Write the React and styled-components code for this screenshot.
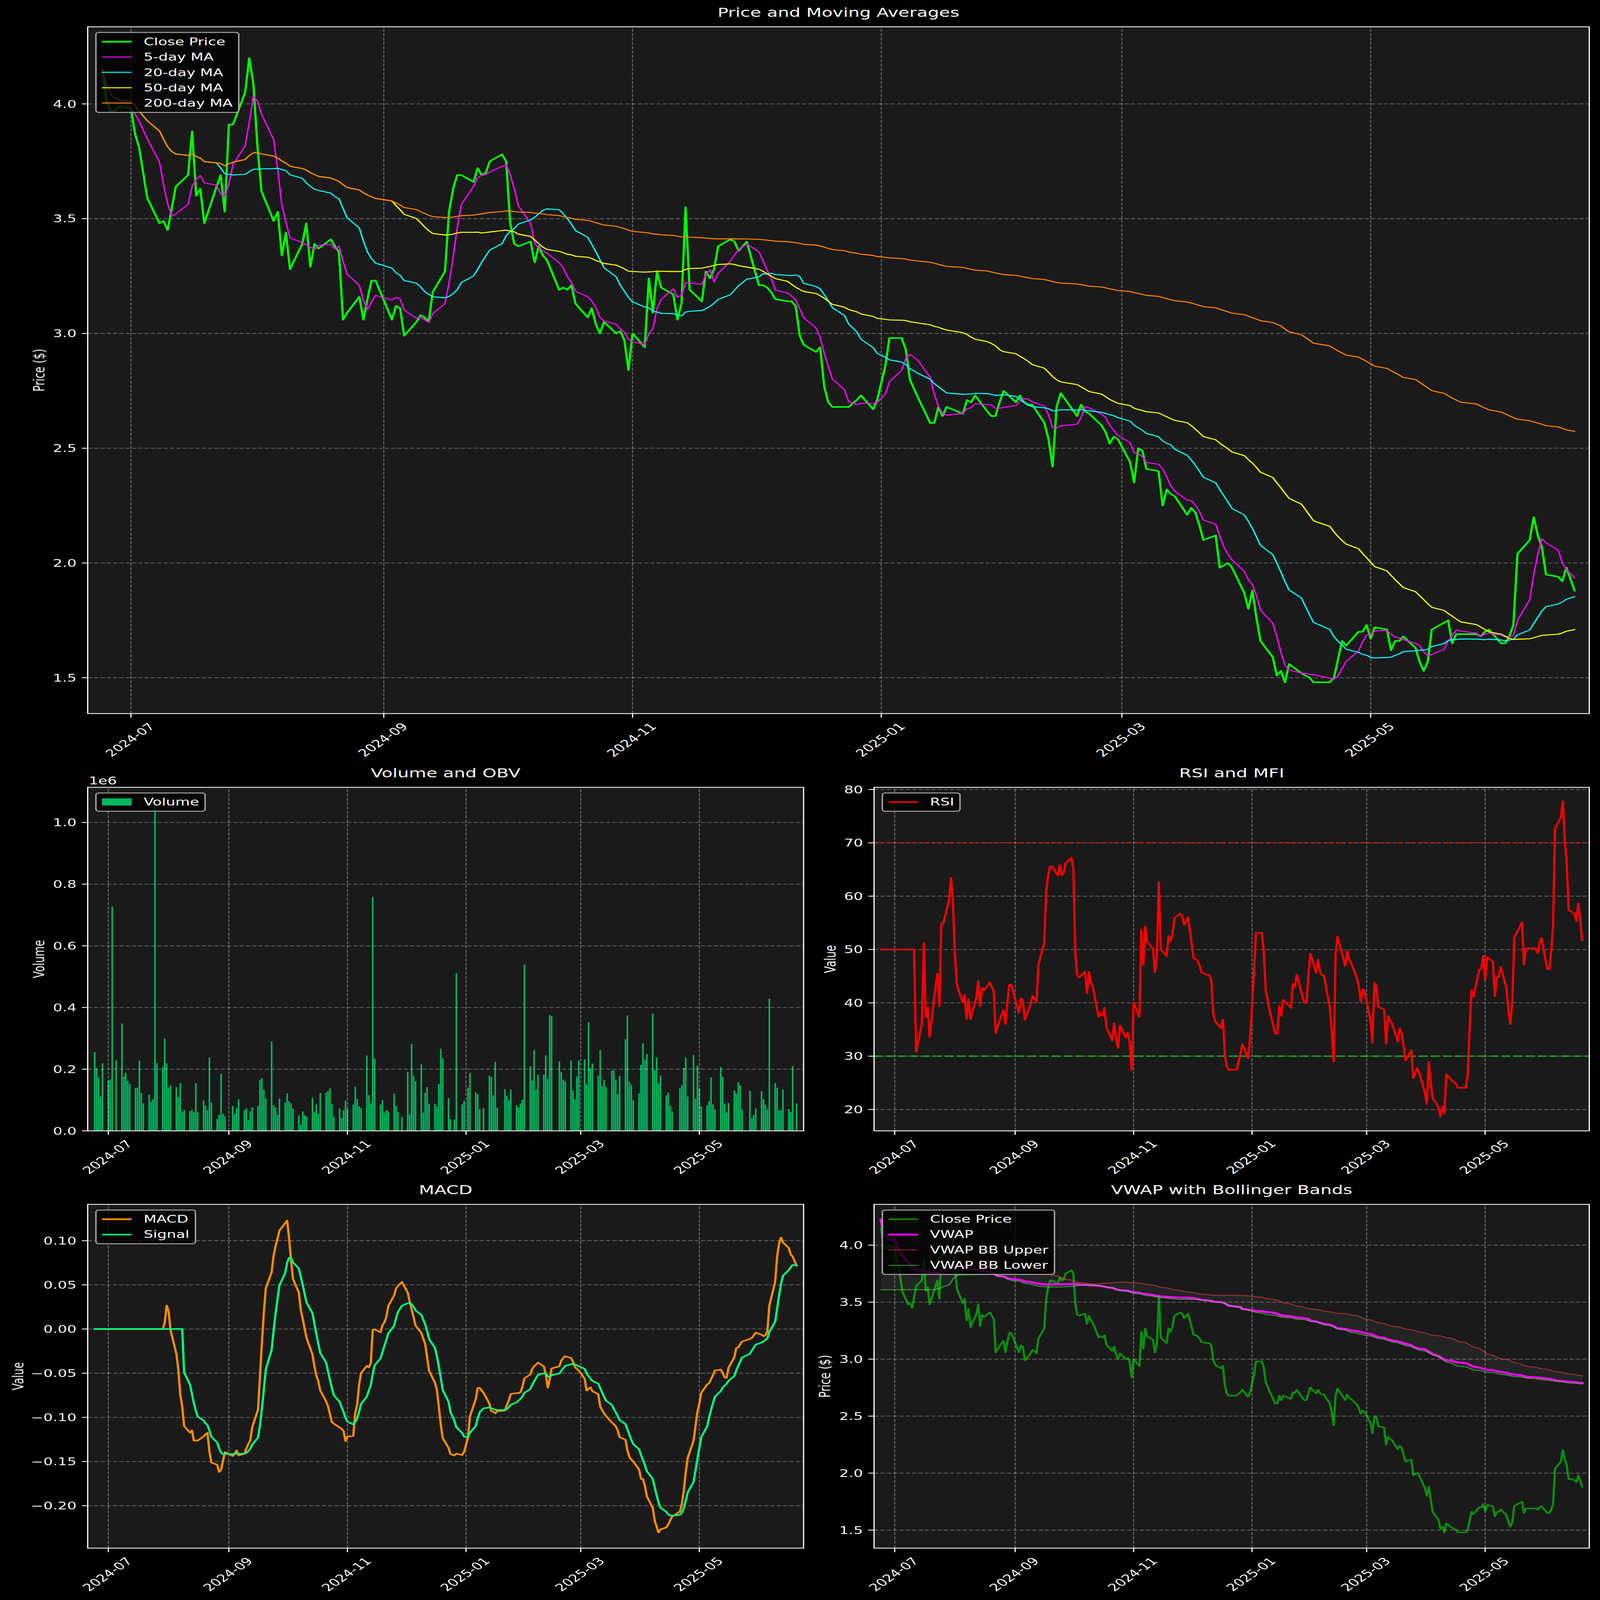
import React, { useEffect, useState } from 'react';
import styled, { createGlobalStyle } from 'styled-components';

const Global = createGlobalStyle`
  html, body { margin: 0; padding: 0; background: #000; overflow: hidden; }
`;

const FONT = '"DejaVu Sans", "Liberation Sans", sans-serif';
const PAGE_W = 4470;
const PAGE_H = 6507;

/* ---------- market data, one row per trading week ---------- */
const CLOSE_WEEKS = [
  [4.15,4.01,3.97,3.97,3.99],[3.98,3.87,3.81,3.59],[3.48,3.49,3.45,3.545,3.64],[3.69,3.88,3.60,3.63,3.48],
  [3.64,3.69,3.53,3.91,3.91],[4.05,4.20,4.09,3.82,3.62],[3.49,3.53,3.34,3.44,3.28],[3.39,3.48,3.29,3.39,3.37],
  [3.41,3.38,3.355,3.06,3.09],[3.16,3.06,3.15,3.23,3.23],[3.06,3.12,3.11,2.99],[3.05,3.08,3.07,3.05,3.18],
  [3.27,3.53,3.63,3.69,3.69],[3.66,3.72,3.69,3.70,3.75],[3.78,3.75,3.48,3.39,3.38],[3.40,3.31,3.38,3.34,3.32],
  [3.19,3.20,3.19,3.21,3.13],[3.07,3.11,3.04,3.00,3.05],[3.00,3.01,2.97,2.84,3.00],[2.94,3.24,3.09,3.27,3.20],
  [3.17,3.06,3.13,3.55,3.19],[3.14,3.27,3.24,3.28,3.38],[3.41,3.40,3.36,3.40],[3.21,3.21,3.20,3.18,3.15],
  [3.14,3.14,3.12,2.99,2.95],[2.92,2.94,2.77,2.70,2.68],[2.68,2.68,2.71,2.73],[2.67,2.71,2.86,2.98],
  [2.98,2.93,2.80,2.72],[2.61,2.61,2.68,2.64,2.68],[2.65,2.71,2.70,2.73],[2.66,2.64,2.64,2.70,2.75],
  [2.70,2.73,2.70,2.69,2.69],[2.61,2.54,2.42,2.68,2.74],[2.64,2.69,2.66,2.65],[2.60,2.57,2.52,2.55,2.54],
  [2.44,2.35,2.50,2.49,2.41],[2.40,2.25,2.32,2.30,2.29],[2.21,2.24,2.22,2.165,2.10],[2.12,1.98,1.99,2.00,1.98],
  [1.87,1.80,1.88,1.76,1.66],[1.59,1.51,1.53,1.48,1.56],[1.52,1.51,1.50,1.48],[1.48,1.50,1.58,1.66,1.64],
  [1.70,1.70,1.73,1.67,1.72],[1.71,1.62,1.66,1.66,1.68],[1.63,1.57,1.53,1.57,1.71],[1.74,1.75,1.65,1.69,1.69],
  [1.69,1.68,1.70,1.71],[1.65,1.65,1.68,1.73,2.04],[2.10,2.20,2.12,2.07,1.95],[1.94,1.92,1.98,1.88],
];
const VOLUME_WEEKS = [
  [.255,.204,.174,.112,.219],[.163,.167,.727,.229],[.348,.176,.188,.163,.152],[.139,.14,.228,.123,.089],
  [.118,.094,.102,1.061,.22],[.208,.299,.219,.141,.148],[.142,.11,.155,.061,.068],[.064,.068,.06,.155,.06],
  [.099,.082,.067,.238,.092],[.039,.052,.185,.055,.047],[.081,.055,.074,.102],[.067,.073,.036,.064,.076],
  [.08,.165,.171,.133,.105],[.29,.083,.076,.052,.105],[.092,.121,.096,.089,.072],[.051,.021,.063,.051,.046],
  [.107,.06,.085,.055,.123],[.124,.129,.138,.087,.046],[.073,.041,.067,.098,.072],[.085,.143,.104,.08,.074],
  [.244,.116,.089,.758,.234],[.085,.1,.059,.067,.063],[.121,.081,.061,.046],[.191,.054,.282,.179,.161],
  [.216,.059,.124,.142,.088],[.088,.079,.152,.266,.236],[.106,.038,.037,.511],[.086,.097,.14,.188],
  [.125,.119,.071,.073],[.179,.175,.115,.224,.075],[.135,.113,.1,.134],[.083,.076,.089,.101,.539],
  [.209,.163,.262,.134,.182],[.182,.245,.169,.376,.373],[.225,.191,.166,.161],[.228,.131,.103,.176,.228],
  [.232,.151,.352,.203,.218],[.179,.262,.146,.165,.142],[.196,.196,.166,.119,.178],[.297,.374,.159,.149,.099],
  [.121,.214,.284,.231,.249],[.38,.198,.238,.155,.179],[.115,.124,.081,.064],[.138,.149,.204,.238,.112],
  [.246,.105,.211,.138,.079],[.082,.096,.173,.086,.069],[.207,.176,.088,.06,.09],[.131,.12,.158,.148,.069],
  [.13,.041,.051,.073],[.128,.103,.085,.07,.429],[.155,.14,.066,.068,.134],[.071,.061,.21,.089],
];
const CLOSED = new Set([10, 70, 157, 184, 191, 199, 210, 238, 298, 336, 360]);
const SPAN_DAYS = 361;

const dayOffsets = [];
for (let d = 0; d <= SPAN_DAYS; d += 1) {
  if (d % 7 < 5 && !CLOSED.has(d)) dayOffsets.push(d);
}
const close = CLOSE_WEEKS.flat();
const volume = VOLUME_WEEKS.flat();

const rollingMean = (src, n) =>
  src.map((_, i) => {
    const part = src.slice(Math.max(0, i - n + 1), i + 1);
    return part.reduce((a, b) => a + b, 0) / part.length;
  });

const smooth = (src, k, start = 0) => {
  const out = [];
  src.forEach((v, i) => {
    if (i < start) out.push(0);
    else if (i === start) out.push(v);
    else out.push(v * k + out[i - 1] * (1 - k));
  });
  return out;
};
const ema = (src, span, start = 0) => smooth(src, 2 / (span + 1), start);

const ma5 = rollingMean(close, 5);
const ma20 = rollingMean(close, 20);
const ma50 = rollingMean(close, 50);
const ma200 = rollingMean(close, 200);

const deltas = close.map((c, i) => (i === 0 ? 0 : c - close[i - 1]));
const avgUp = smooth(deltas.map((x) => Math.max(x, 0)), 1 / 14);
const avgDown = smooth(deltas.map((x) => Math.max(-x, 0)), 1 / 14);
const rsi = close.map((_, i) => {
  if (i < 13) return 50;
  return avgDown[i] === 0 ? 100 : 100 - 100 / (1 + avgUp[i] / avgDown[i]);
});

const ema12 = ema(close, 12);
const ema26 = ema(close, 26);
const macd = close.map((_, i) => (i < 25 ? 0 : ema12[i] - ema26[i]));
const signal = ema(macd, 9, 25).map((v, i) => (i < 33 ? 0 : v));

let cumPV = 0;
let cumV = 0;
const vwap = close.map((c, i) => {
  const tp = i === 0 ? 4.225 : c;
  cumPV += tp * volume[i];
  cumV += volume[i];
  return cumPV / cumV;
});
const bands = vwap.map((_, i) => {
  const k = Math.max(i, 19);
  const part = vwap.slice(k - 19, k + 1);
  const mean = part.reduce((a, b) => a + b, 0) / 20;
  const sd = Math.sqrt(part.reduce((a, b) => a + (b - mean) ** 2, 0) / 19);
  return { upper: mean + 2 * sd, lower: mean - 2 * sd };
});
const bbUpper = bands.map((b) => b.upper);
const bbLower = bands.map((b) => b.lower);

const DATE_TICKS = [
  [7, '2024-07'], [69, '2024-09'], [130, '2024-11'],
  [191, '2025-01'], [250, '2025-03'], [311, '2025-05'],
];

/* ---------- page layout ---------- */
const Viewport = styled.div`
  width: 100vw;
  height: 100vh;
  overflow: hidden;
  background: #000;
`;

const Figure = styled.div`
  width: ${PAGE_W}px;
  height: ${PAGE_H}px;
  box-sizing: border-box;
  padding-right: 30px;
  background: #000;
  display: grid;
  grid-template-columns: 2245px 2195px;
  grid-template-rows: auto auto auto;
  row-gap: 190.5px;
  align-content: start;
  transform-origin: 0 0;
  font-family: ${FONT};
  color: #fff;
`;

const Panel = styled.section`
  grid-column: ${(p) => (p.$wide ? '1 / span 2' : 'auto')};
  padding-left: ${(p) => p.$left}px;
  display: flex;
  flex-direction: column;
`;

const Title = styled.h2`
  margin: 0;
  height: 109px;
  box-sizing: border-box;
  padding-bottom: 29px;
  display: flex;
  align-items: flex-end;
  justify-content: center;
  font-size: 50px;
  line-height: 58px;
  font-weight: 400;
  white-space: nowrap;
`;

const Plot = styled.div`
  position: relative;
  height: ${(p) => p.$height}px;
`;

const Canvas = styled.svg`
  display: block;
  overflow: visible;
`;

const Legend = styled.div`
  position: absolute;
  left: 21px;
  top: 21px;
  width: max-content;
  box-sizing: border-box;
  padding: 14.58px;
  border: 4.17px solid rgba(204, 204, 204, 0.8);
  border-radius: 10px;
  background: rgba(0, 0, 0, 0.8);
  display: flex;
  flex-direction: column;
  gap: 20.83px;
`;

const LegendRow = styled.div`
  display: flex;
  align-items: center;
  gap: 33.33px;
  height: 41.67px;
  font-size: 41.67px;
  line-height: 41.67px;
  white-space: nowrap;
`;

const LegendHandle = styled.span`
  flex: none;
  width: 83.33px;
  height: ${(p) => p.$size}px;
  background: ${(p) => p.$color};
  opacity: ${(p) => p.$alpha ?? 1};
`;

/* ---------- chart parts ---------- */
const Backdrop = styled.rect`
  fill: #1a1a1a;
`;
const GridLine = styled.line`
  stroke: rgba(255, 255, 255, 0.3);
  stroke-width: 3.33;
  stroke-dasharray: 12.33 5.33;
`;
const Spine = styled.rect`
  fill: none;
  stroke: #fff;
  stroke-width: 3.33;
`;
const Tick = styled.line`
  stroke: #fff;
  stroke-width: 3.33;
`;
const AxisText = styled.text`
  fill: #fff;
  font-family: ${FONT};
  font-size: 41.67px;
`;
const Series = styled.polyline`
  fill: none;
  stroke: ${(p) => p.$color};
  stroke-width: ${(p) => p.$width};
  stroke-opacity: ${(p) => p.$alpha ?? 1};
  stroke-linejoin: round;
  stroke-linecap: square;
`;
const Threshold = styled.line`
  stroke: ${(p) => p.$color};
  stroke-opacity: 0.5;
  stroke-width: 6.25;
  stroke-dasharray: 23.1 10;
`;
const Band = styled.polygon`
  fill: rgba(128, 128, 128, 0.1);
`;
const Bar = styled.rect`
  fill: #00b85f;
`;

const makeScales = (width, height, yMin, yMax) => {
  const perDay = width / 1.02 / SPAN_DAYS;
  const margin = width * (0.01 / 1.02);
  return {
    x: (d) => margin + d * perDay,
    y: (v) => height - ((v - yMin) / (yMax - yMin)) * height,
    barWidth: 0.8 * perDay,
  };
};

const toPairs = (values, s) =>
  values.map((v, i) => `${s.x(dayOffsets[i]).toFixed(1)},${s.y(v).toFixed(1)}`);
const points = (values, s) => toPairs(values, s).join(' ');

function Chart({ width, height, yMin, yMax, yTicks, yLabel, yLabelX, exponent, legend, underGrid, children, title, left, wide }) {
  const s = makeScales(width, height, yMin, yMax);
  return (
    <Panel $left={left} $wide={wide}>
      <Title>{title}</Title>
      <Plot $height={height}>
        <Canvas width={width} height={height} viewBox={`0 0 ${width} ${height}`}>
          <Backdrop width={width} height={height} />
          {underGrid && underGrid(s)}
          {DATE_TICKS.map(([d]) => (
            <GridLine key={d} x1={s.x(d)} x2={s.x(d)} y1={height} y2={0} />
          ))}
          {yTicks.map(([v]) => (
            <GridLine key={v} x1={0} x2={width} y1={s.y(v)} y2={s.y(v)} />
          ))}
          {children(s)}
          <Spine width={width} height={height} />
          {DATE_TICKS.map(([d, label]) => (
            <g key={label}>
              <Tick x1={s.x(d)} x2={s.x(d)} y1={height} y2={height + 16.25} />
              <AxisText
                x={s.x(d) - 3}
                y={height + 121}
                textAnchor="middle"
                transform={`rotate(-45 ${s.x(d) - 3} ${height + 106})`}
              >
                {label}
              </AxisText>
            </g>
          ))}
          {yTicks.map(([v, label]) => (
            <g key={label}>
              <Tick x1={-16.25} x2={0} y1={s.y(v)} y2={s.y(v)} />
              <AxisText x={-31} y={s.y(v) + 15.2} textAnchor="end">{label}</AxisText>
            </g>
          ))}
          <AxisText
            x={yLabelX}
            y={height / 2}
            textAnchor="middle"
            transform={`rotate(-90 ${yLabelX} ${height / 2})`}
          >
            {yLabel}
          </AxisText>
          {exponent && <AxisText x={3} y={-12}>{exponent}</AxisText>}
        </Canvas>
        <Legend>
          {legend.map((item) => (
            <LegendRow key={item.label}>
              <LegendHandle $color={item.color} $size={item.size} $alpha={item.alpha} />
              {item.label}
            </LegendRow>
          ))}
        </Legend>
      </Plot>
    </Panel>
  );
}

const PRICE_TICKS = [[1.5, '1.5'], [2, '2.0'], [2.5, '2.5'], [3, '3.0'], [3.5, '3.5'], [4, '4.0']];
const VOLUME_TICKS = [[0, '0.0'], [0.2, '0.2'], [0.4, '0.4'], [0.6, '0.6'], [0.8, '0.8'], [1, '1.0']];
const RSI_TICKS = [20, 30, 40, 50, 60, 70, 80].map((v) => [v, String(v)]);
const MACD_TICKS = [
  [-0.2, '\u22120.20'], [-0.15, '\u22120.15'], [-0.1, '\u22120.10'], [-0.05, '\u22120.05'],
  [0, '0.00'], [0.05, '0.05'], [0.1, '0.10'],
];

const fitToWindow = () => `scale(${window.innerWidth / PAGE_W}, ${window.innerHeight / PAGE_H})`;

export default function App() {
  const [fit, setFit] = useState(fitToWindow);
  useEffect(() => {
    const onResize = () => setFit(fitToWindow());
    window.addEventListener('resize', onResize);
    return () => window.removeEventListener('resize', onResize);
  }, []);
  return (
    <>
      <Global />
      <Viewport>
        <Figure style={{ transform: fit }}>
          <Chart
            wide
            left={245}
            title="Price and Moving Averages"
            width={4195}
            height={2793}
            yMin={1.344}
            yMax={4.336}
            yTicks={PRICE_TICKS}
            yLabel="Price ($)"
            yLabelX={-121}
            legend={[
              { label: 'Close Price', color: '#00ff00', size: 6.25 },
              { label: '5-day MA', color: '#ff00ff', size: 4.17 },
              { label: '20-day MA', color: '#00ffff', size: 4.17 },
              { label: '50-day MA', color: '#ffff00', size: 4.17 },
              { label: '200-day MA', color: '#ff8000', size: 4.17 },
            ]}
          >
            {(s) => (
              <>
                <Series points={points(close, s)} $color="#00ff00" $width={6.25} />
                <Series points={points(ma5, s)} $color="#ff00ff" $width={4.17} />
                <Series points={points(ma20, s)} $color="#00ffff" $width={4.17} />
                <Series points={points(ma50, s)} $color="#ffff00" $width={4.17} />
                <Series points={points(ma200, s)} $color="#ff8000" $width={4.17} />
              </>
            )}
          </Chart>

          <Chart
            left={245}
            title="Volume and OBV"
            width={2000}
            height={1397}
            yMin={0}
            yMax={1.114}
            yTicks={VOLUME_TICKS}
            yLabel="Volume"
            yLabelX={-121}
            exponent="1e6"
            legend={[{ label: 'Volume', color: '#00b85f', size: 29.17 }]}
            underGrid={(s) =>
              volume.map((v, i) => (
                <Bar
                  key={dayOffsets[i]}
                  x={s.x(dayOffsets[i]) - s.barWidth / 2}
                  y={s.y(v)}
                  width={s.barWidth}
                  height={1397 - s.y(v)}
                />
              ))
            }
          >
            {() => null}
          </Chart>

          <Chart
            left={197}
            title="RSI and MFI"
            width={1998}
            height={1397}
            yMin={16}
            yMax={80.4}
            yTicks={RSI_TICKS}
            yLabel="Value"
            yLabelX={-108}
            legend={[{ label: 'RSI', color: '#ff0000', size: 6.25 }]}
          >
            {(s) => (
              <>
                <Threshold x1={0} x2={1998} y1={s.y(70)} y2={s.y(70)} $color="#ff0000" />
                <Threshold x1={0} x2={1998} y1={s.y(30)} y2={s.y(30)} $color="#00ff00" />
                <Series points={points(rsi, s)} $color="#ff0000" $width={6.25} />
              </>
            )}
          </Chart>

          <Chart
            left={245}
            title="MACD"
            width={2000}
            height={1398}
            yMin={-0.248}
            yMax={0.1411}
            yTicks={MACD_TICKS}
            yLabel="Value"
            yLabelX={-180}
            legend={[
              { label: 'MACD', color: '#ff8c00', size: 6.25 },
              { label: 'Signal', color: '#00ff7f', size: 6.25 },
            ]}
          >
            {(s) => (
              <>
                <Series points={points(macd, s)} $color="#ff8c00" $width={6.25} />
                <Series points={points(signal, s)} $color="#00ff7f" $width={6.25} />
              </>
            )}
          </Chart>

          <Chart
            left={197}
            title="VWAP with Bollinger Bands"
            width={1998}
            height={1398}
            yMin={1.342}
            yMax={4.358}
            yTicks={PRICE_TICKS}
            yLabel="Price ($)"
            yLabelX={-123}
            legend={[
              { label: 'Close Price', color: '#00ff00', size: 6.25, alpha: 0.5 },
              { label: 'VWAP', color: '#ff00ff', size: 8.33 },
              { label: 'VWAP BB Upper', color: '#ff4444', size: 4.17, alpha: 0.5 },
              { label: 'VWAP BB Lower', color: '#44ff44', size: 4.17, alpha: 0.5 },
            ]}
          >
            {(s) => (
              <>
                <Band points={[...toPairs(bbUpper, s), ...toPairs(bbLower, s).reverse()].join(' ')} />
                <Series points={points(close, s)} $color="#00ff00" $width={6.25} $alpha={0.5} />
                <Series points={points(vwap, s)} $color="#ff00ff" $width={8.33} />
                <Series points={points(bbUpper, s)} $color="#ff4444" $width={4.17} $alpha={0.5} />
                <Series points={points(bbLower, s)} $color="#44ff44" $width={4.17} $alpha={0.5} />
              </>
            )}
          </Chart>
        </Figure>
      </Viewport>
    </>
  );
}
